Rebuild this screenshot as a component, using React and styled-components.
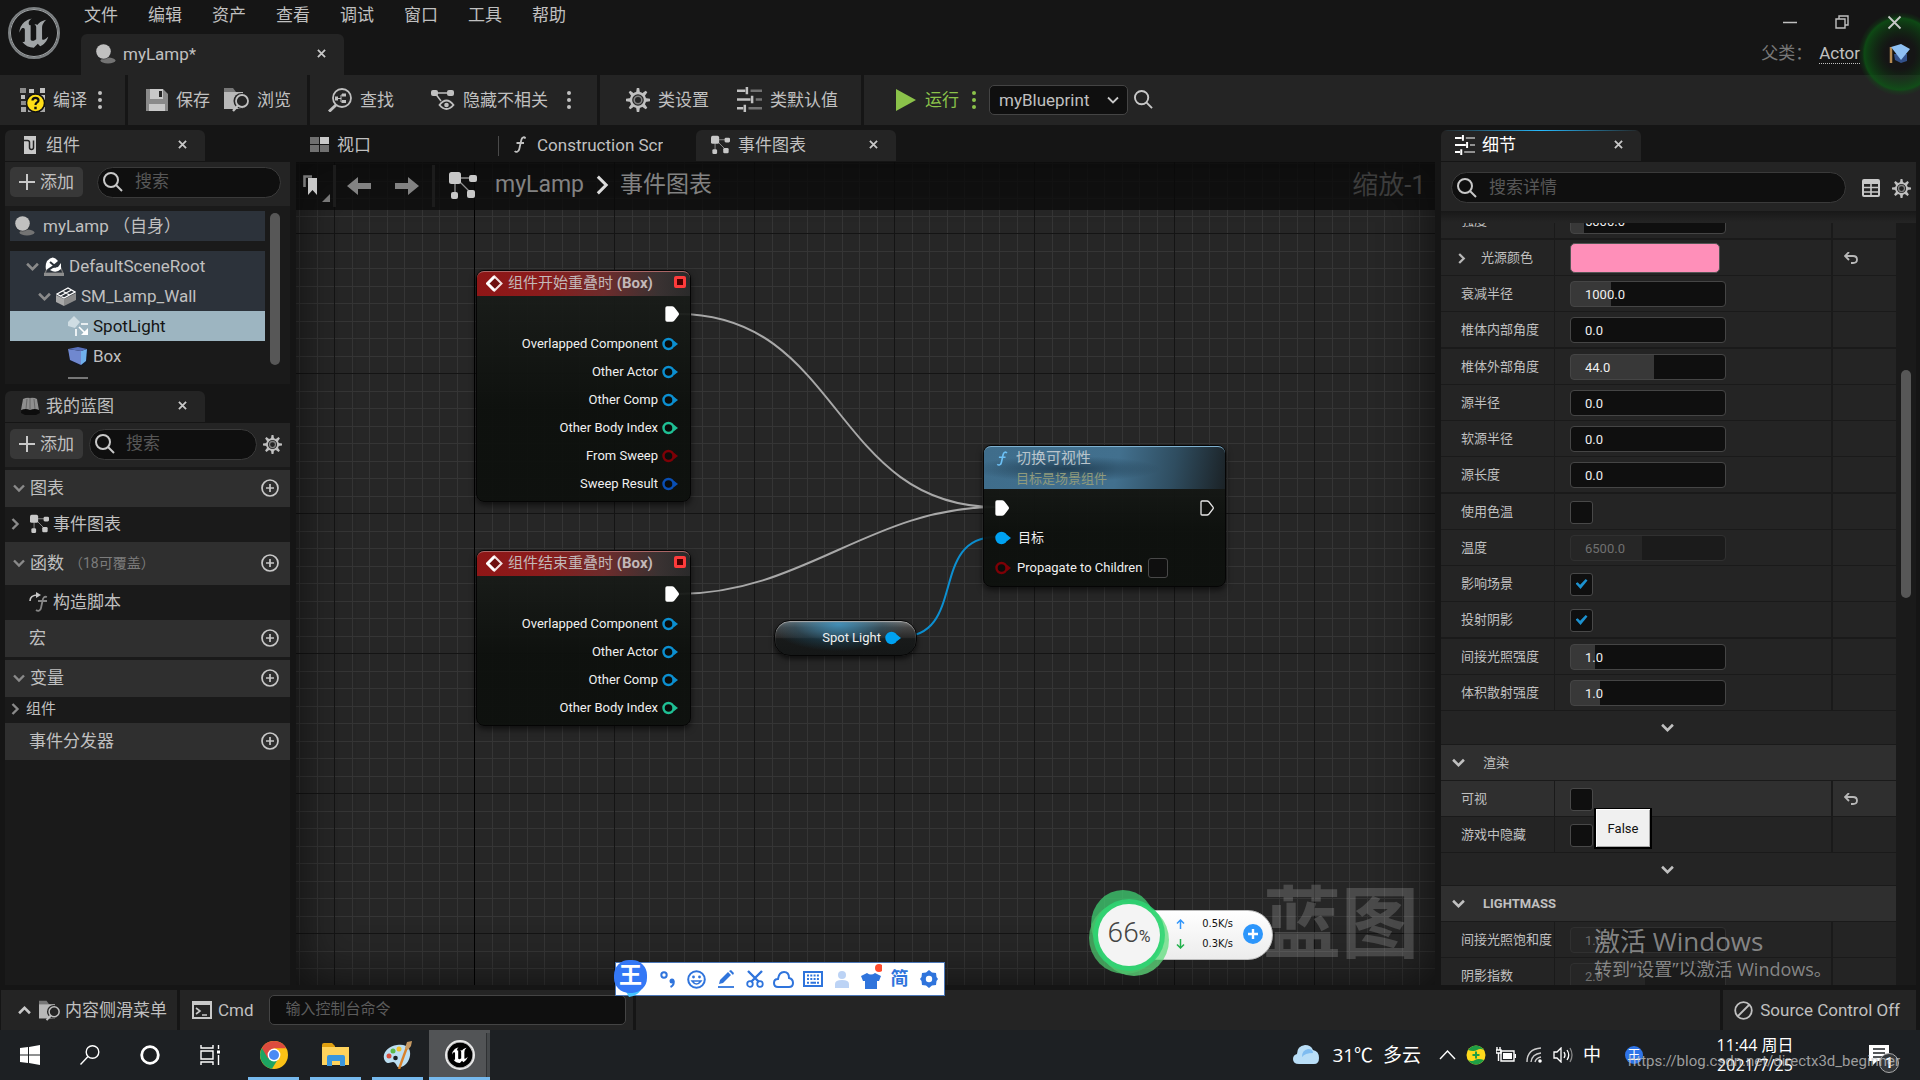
import React from "react";
import styled, { createGlobalStyle, css } from "styled-components";
import { SiUnrealengine } from "react-icons/si";

const sans = `Roboto, "Noto Sans CJK SC", sans-serif`;

const GlobalStyle = createGlobalStyle`
  * { box-sizing: border-box; }
  body { margin: 0; background: #151515; color: #c0c0c0; font: 17px/20px ${sans}; overflow: hidden; }
  button, input, select { font: inherit; color: inherit; }
  button { border: 0; padding: 0; background: none; cursor: pointer; }
  svg { display: block; flex: none; }
  a { color: inherit; text-decoration: none; }
  ul, h2, h3, p { margin: 0; padding: 0; font: inherit; list-style: none; }
`;

/* ---------- icons ---------- */

const Svg = ({ w, h = w, vb, children, ...rest }) => (
  <svg width={w} height={h} viewBox={vb || `0 0 ${w} ${h}`} fill="none" aria-hidden="true" {...rest}>
    {children}
  </svg>
);

const Close = ({ size = 9, sw = 2 }) => (
  <Svg w={size} vb="0 0 10 10">
    <path d="M1 1 9 9M9 1 1 9" stroke="#c8c8c8" strokeWidth={sw} />
  </Svg>
);
const Magnifier = ({ size = 20 }) => (
  <Svg w={size} vb="0 0 20 20">
    <circle cx="8" cy="8" r="7" stroke="#c8c8c8" strokeWidth="2" />
    <path d="m13 13 6 6" stroke="#c8c8c8" strokeWidth="2" />
  </Svg>
);
const Chevron = ({ dir = "down", size = 12, color = "#8a8a8a", sw = 2.4 }) => {
  const turn = { down: 0, up: 180, right: -90 }[dir];
  return (
    <Svg w={size} vb="0 0 12 12">
      <path d="m1 3.5 5 5 5-5" stroke={color} strokeWidth={sw} transform={`rotate(${turn} 6 6)`} />
    </Svg>
  );
};
const Gear = ({ size = 24, color = "#c0c0c0" }) => (
  <Svg w={size} vb="0 0 24 24">
    {[0, 45, 90, 135, 180, 225, 270, 315].map((a) => (
      <path key={a} d="M10 5 10.8 0h2.4L14 5z" fill={color} transform={`rotate(${a} 12 12)`} />
    ))}
    <circle cx="12" cy="12" r="7" stroke={color} strokeWidth="2.4" />
    <circle cx="12" cy="12" r="3.8" stroke={color} strokeWidth="1.6" opacity=".6" />
  </Svg>
);
const Sliders = ({ size = 24, color = "#c0c0c0" }) => (
  <Svg w={size} vb="0 0 24 24">
    <path d="M0 3.500h8M0 12h13M0 20.500h6" stroke={color} strokeWidth="2.400" />
    <path d="M13 3.500h11M18 12h6M11 20.500h13" stroke={color} strokeWidth="2.400" opacity=".5" />
    <path d="M9.500 0v7M14.500 8.500v7M7.500 17v7" stroke={color} strokeWidth="2.400" />
  </Svg>
);
const GraphIcon = ({ size = 18, color = "#c8c8c8" }) => (
  <Svg w={size} vb="0 0 28 28">
    <path d="M7 7h16M6 7v18M8 8l15 15" stroke={color} strokeWidth="1.300" opacity=".7" />
    <rect x="0" y="1" width="12" height="12" rx="2.500" fill={color} />
    <rect x="20" y="4" width="8" height="7" rx="2" fill={color} />
    <rect x="2" y="21" width="7" height="7" rx="2" fill={color} />
    <rect x="18" y="19" width="8" height="8" rx="2" fill={color} />
  </Svg>
);
const BulbIcon = ({ size = 20 }) => (
  <Svg w={size} vb="0 0 20 20">
    <ellipse cx="12" cy="16.500" rx="7.500" ry="3" fill="#737373" />
    <circle cx="7.500" cy="8" r="7.500" fill="#1f2226" opacity=".6" />
    <circle cx="7.500" cy="7.500" r="7.300" fill="#c0c0c0" />
  </Svg>
);
const CompileIcon = () => (
  <Svg w={25} h={26}>
    <path d="M0 1h6v5H0zM10 8h5v5h-5zM1 14h5v4H1z" fill="#8c8c8c" />
    <path d="M9 2h5v4H9zM1 8h4v4H1zM20 1h5v5h-5zM20 8h5v5h-5z" fill="#c0c0c0" />
    <path d="M1 20h5v5H1zM8 20h5v5H8zM20 20h5v5h-5z" fill="#a8a8a8" />
    <circle cx="15.500" cy="16" r="9" fill="#ffde17" stroke="#111" strokeWidth="1.500" />
    <path d="M12.500 13.500c0-3.500 6-3.500 6 0 0 2-3 2-3 4.500" stroke="#111" strokeWidth="2.200" />
    <path d="M14.300 19.800h2.400v2.400h-2.400z" fill="#111" />
  </Svg>
);
const SaveIcon = () => (
  <Svg w={22}>
    <path d="M0 0h17l5 5v17H0z" fill="#8a8a8a" />
    <path d="M4 0h13v10H4z" fill="#c8c8c8" />
    <path d="M13 2h3v6h-3z" fill="#242424" />
    <path d="M3 15h16v7H3z" fill="#c8c8c8" />
  </Svg>
);
const FolderSearch = ({ size = 25 }) => (
  <Svg w={size} vb="0 0 25 25">
    <path d="M0 1h9l3 4H0z" fill="#777" />
    <path d="M0 5h19v17H0z" fill="#b8b8b8" />
    <circle cx="17.500" cy="14" r="8" fill="#242424" />
    <circle cx="18" cy="14" r="6" stroke="#c0c0c0" strokeWidth="1.800" fill="#242424" />
    <path d="m14 18.500-5 5.500" stroke="#c0c0c0" strokeWidth="2.400" />
  </Svg>
);
const FindIcon = () => (
  <Svg w={24}>
    <circle cx="14" cy="10" r="9" stroke="#c0c0c0" strokeWidth="1.800" />
    <path d="m8 17-7 6.500" stroke="#c0c0c0" strokeWidth="3" />
    <path d="M7 8.500h3v4H7zM14 5.500h4v3h-4zM14 12h4v3h-4z" fill="#c0c0c0" />
    <path d="M10 10.500h3M14.500 7H13v7h2" stroke="#c0c0c0" />
  </Svg>
);
const HideIcon = () => (
  <Svg w={24} h={22}>
    <path d="M4 4h16M4 4l6 8" stroke="#c0c0c0" strokeWidth="1.500" />
    <rect y="1" width="7" height="6" rx="2" fill="#c0c0c0" />
    <rect x="16" y="1" width="7" height="6" rx="2" fill="#c0c0c0" />
    <path d="M8.500 16q7-9 14 0-7 8-14 0Z" stroke="#c0c0c0" strokeWidth="1.800" fill="#242424" />
    <circle cx="15.500" cy="16" r="2.300" fill="#c0c0c0" />
  </Svg>
);
const Dots = ({ color = "#c0c0c0" }) => (
  <Svg w={6} h={18}>
    {[2, 9, 16].map((y) => (
      <circle key={y} cx="3" cy={y} r="2" fill={color} />
    ))}
  </Svg>
);
const ComponentIcon = () => (
  <Svg w={12} h={18}>
    <path d="M0 0h12v18H0z" fill="#c8c8c8" />
    <path d="M0 4.500h3.500q2 0 2 2v5q0 2 2 2t2-2v-7" stroke="#242424" strokeWidth="1.500" />
  </Svg>
);
const BookIcon = () => (
  <Svg w={20} h={18}>
    <path d="M1 16 3 3q4-4 7-1 4-3 7 1l3 13-4 2H5z" fill="#0d0d0d" />
    <path d="M1 13 3 2q4-2 7-1 4-1 7 1l2 11q-4-2-9 0-4-2-9 0z" fill="#8f8f8f" />
    <path d="M7 2 6 12M10 1v12M14 2l1 10" stroke="#666" />
  </Svg>
);
const ViewportIcon = () => (
  <Svg w={19} h={15}>
    <path d="M0 0h9v7H0zM0 8h9v7H0zM10 8h9v7h-9z" fill="#707070" />
    <path d="M10 0h9v7h-9z" fill="#c8c8c8" />
  </Svg>
);
const FuncIcon = ({ w = 12, h = 17, color = "#c0c0c0" }) => (
  <Svg w={w} h={h} vb="0 0 12 17">
    <path d="M11.500 2.500C10.500.500 8 .800 7.300 4L5.300 13c-.600 3-3.200 3.600-4.600 2M2.500 7h7.500" stroke={color} strokeWidth="1.800" />
  </Svg>
);
const RootIcon = () => (
  <Svg w={20} h={19}>
    <path d="M3 12 1 16h18l-3-7" fill="#2c323a" stroke="#777" strokeWidth="1.200" />
    <path d="M3 4Q9-3 14 4L8 9 2 13Q1 8 3 4z" fill="#fff" />
    <path d="M6 13q6 4 11-1V6l-3 4-5 1z" fill="#fff" />
    <path d="m6 5 6 5" stroke="#2c323a" strokeWidth="2" />
    <path d="M0 16h20v3H0z" fill="#8e8e8e" />
  </Svg>
);
const MeshIcon = () => (
  <Svg w={20} h={19}>
    <path d="m0 8 8 4v7l-8-4z" fill="#a8a8a8" />
    <path d="m8 12 12-6v7L8 19z" fill="#8a8a8a" />
    <path d="m1 7 11-6 7 4L8 11zM6.500 4l7 4M4.500 9l11-6" stroke="#fff" strokeWidth="1.300" fill="#2c323a" />
  </Svg>
);
const SpotIcon = () => (
  <Svg w={20} h={20}>
    <path d="m0 6 6-6 6 6-5 6-7-2z" fill="#cfdde3" />
    <path d="M13 8h7M8 13v7M11 11l6 6" stroke="#fff" strokeWidth="1.600" />
    <path d="M20 19v-7l-7 7z" fill="#fff" />
  </Svg>
);
const BoxIcon = () => (
  <Svg w={20} h={20}>
    <path d="M1 3 12 1l8 2-1 14-6 3-12-5z" fill="#141824" />
    <path d="m0 3 13 2v14L2 14z" fill="#7088cf" />
    <path d="m13 5 6-2-1 12-5 4z" fill="#6fb0ec" />
    <path d="m0 3 10-2 9 2-6 2z" fill="#5a72bd" />
  </Svg>
);
const PlusCircle = () => (
  <Svg w={18}>
    <circle cx="9" cy="9" r="8" stroke="#c8c8c8" strokeWidth="1.700" />
    <path d="M9 5v8M5 9h8" stroke="#c8c8c8" strokeWidth="1.700" />
  </Svg>
);
const ConstructIcon = () => (
  <Svg w={20} h={20}>
    <path d="M1 9q0-6 8-6" stroke="#c8c8c8" strokeWidth="1.600" />
    <path d="M7 0l5 3-5 3z" fill="#c8c8c8" />
    <path d="M18 5c-3-1-4 1-4.500 4L12 16c-.500 3-3 3.500-5 2M9 9h9" stroke="#858585" strokeWidth="1.800" />
  </Svg>
);
const Bookmarks = () => (
  <Svg w={30} h={32}>
    <path d="M4.500 17V6.500H12" stroke="#777" strokeWidth="2.600" />
    <path d="M8 8h9v17l-4.500-5L8 25z" fill="#c8c8c8" />
    <path d="M30 24v8h-8z" fill="#777" />
  </Svg>
);
const Arrow = ({ flip }) => (
  <Svg w={24} h={18}>
    <path d={flip ? "M24 9 13 0v6H0v6h13v6z" : "M0 9 11 0v6h13v6H11v6z"} fill="#828282" />
  </Svg>
);
const Undo = () => (
  <Svg w={14} h={12}>
    <path d="M2 4h7q4 0 4 3.500T9 11H7" stroke="#b8b8b8" strokeWidth="1.800" />
    <path d="M5 0 1 4l4 4" stroke="#b8b8b8" strokeWidth="1.800" />
  </Svg>
);
const TableIcon = () => (
  <Svg w={18} h={18}>
    <rect x="1" y="1" width="16" height="16" rx="1" stroke="#c8c8c8" strokeWidth="2" />
    <path d="M1 3.500h16" stroke="#c8c8c8" strokeWidth="3" />
    <path d="M1 8.500h16M1 13h16M9 4v13" stroke="#c8c8c8" strokeWidth="1.600" />
  </Svg>
);
const ExecPin = ({ hollow }) => (
  <Svg w={14} h={16}>
    <path
      d="M2 1h5q1 0 2 1l4 5q.600 1 0 2l-4 5q-1 1-2 1H2q-1 0-1-1V2q0-1 1-1z"
      fill={hollow ? "#10120f" : "#fff"}
      stroke={hollow ? "#e6e6e6" : "#fff"}
      strokeWidth="1.300"
    />
  </Svg>
);
const DataPin = ({ color, solid }) => (
  <Svg w={16} h={14}>
    <path d="M11.500 3.500 16 7l-4.500 3.500z" fill={color} />
    <circle cx="6.500" cy="7" r="5" stroke={color} strokeWidth="2.400" fill={solid ? color : "#0a0c0a"} />
  </Svg>
);

/* ---------- shared pieces ---------- */

const Row = styled.div`
  display: flex;
  align-items: center;
  gap: ${(p) => p.$gap || 0}px;
`;

const Tab = styled.div`
  display: flex;
  align-items: center;
  gap: ${(p) => p.$gap || 7}px;
  width: ${(p) => p.$w || 200}px;
  height: ${(p) => p.$h || 31}px;
  padding: 0 ${(p) => p.$pr || 18}px 2px ${(p) => p.$pl || 15}px;
  border-radius: 6px 6px 0 0;
  background: ${(p) => (p.$idle ? "transparent" : "#242424")};
  color: ${(p) => (p.$focus ? "#fff" : "#c0c0c0")};
  white-space: nowrap;
  overflow: hidden;
  ${(p) =>
    p.$focus &&
    css`
      background: linear-gradient(90deg, #242424, #26bbff 50%, #242424) 0 0 / 100% 1px no-repeat, #242424;
    `}
  button { margin-left: auto; }
`;
const TabIcon = styled.span`
  display: flex;
  justify-content: center;
  width: 20px;
`;

const SearchBox = styled.label`
  display: flex;
  align-items: center;
  gap: ${(p) => p.$gap || 12}px;
  flex: 1;
  min-width: 0;
  height: 31px;
  padding: 0 5px;
  border: 1px solid #3a3a3a;
  border-radius: 16px;
  background: #0f0f0f;
  input {
    flex: 1;
    min-width: 0;
    height: 22px;
    padding: 0 0 2px;
    border: 0;
    outline: 0;
    background: none;
  }
  input::placeholder { color: #575757; opacity: 1; }
`;
const Search = ({ text, gap }) => (
  <SearchBox $gap={gap}>
    <Magnifier />
    <input type="text" placeholder={text} aria-label={text} />
  </SearchBox>
);

const Check = styled.input.attrs({ type: "checkbox" })`
  appearance: none;
  display: grid;
  place-items: center;
  width: ${(p) => p.$size || 23}px;
  height: ${(p) => p.$size || 23}px;
  margin: 0;
  border: 1px solid #484848;
  border-radius: 3px;
  background: #0f0f0f;
  &:checked::before {
    content: "";
    width: 12px;
    height: 10px;
    background: #1c91cf;
    clip-path: polygon(0 45%, 18% 32%, 38% 58%, 85% 0, 100% 16%, 42% 100%);
  }
`;

/* ---------- window frame ---------- */

const Page = styled.div`
  display: flex;
  flex-direction: column;
  height: 100vh;
  position: relative;
  overflow: hidden;
`;
const TitleBar = styled.header`
  display: flex;
  height: 75px;
  padding-left: 8px;
`;
const LogoCell = styled.div`
  width: 52px;
  height: 52px;
  margin: 7px 21px 0 0;
  border-radius: 50%;
  border: 2px solid #7c8082;
  color: #a0a4a6;
  svg { width: 48px; height: 48px; }
`;
const TitleMain = styled.div`
  display: flex;
  flex-direction: column;
  justify-content: space-between;
  flex: 1;
`;
const Menu = styled.nav`
  display: flex;
  gap: 30px;
  padding: 5px 0 0 3px;
`;
const TitleSide = styled.div`
  display: flex;
  flex-direction: column;
  align-items: flex-end;
  gap: 13px;
  padding-top: 14px;
`;
const WindowButtons = styled.div`
  position: relative;
  z-index: 1;
  display: flex;
  align-items: center;
  gap: 38px;
  padding-right: 18px;
  height: 16px;
`;
const ParentClass = styled.div`
  display: flex;
  gap: 7px;
  padding-right: 60px;
  color: #777;
  a { color: #c0c0c0; border-bottom: 1px dotted #c0c0c0; line-height: 20px; }
`;

const Toolbar = styled.div`
  display: flex;
  gap: 3px;
  height: 50px;
`;
const Section = styled.div`
  display: flex;
  align-items: center;
  gap: ${(p) => p.$gap || 0}px;
  padding: 0 ${(p) => p.$pr || 0}px 1px ${(p) => p.$pl || 0}px;
  background: #242424;
  flex: ${(p) => (p.$grow ? 1 : "none")};
`;
const ToolButton = styled.button`
  display: flex;
  align-items: center;
  gap: ${(p) => p.$gap || 8}px;
  white-space: nowrap;
  color: ${(p) => p.$color || "#c0c0c0"};
`;
const ComboWrap = styled.span`
  position: relative;
  display: block;
  svg { position: absolute; right: 9px; top: 9px; pointer-events: none; }
`;
const Combo = styled.select`
  appearance: none;
  display: block;
  width: 139px;
  height: 30px;
  padding: 0 9px;
  border: 1px solid #444;
  border-radius: 5px;
  background: #0f0f0f;
  outline: 0;
`;

/* ---------- workspace ---------- */

const Workspace = styled.main`
  display: flex;
  gap: 6px;
  flex: 1;
  min-height: 0;
  padding: 5px 4px 5px 5px;
`;
const LeftColumn = styled.aside`
  display: flex;
  flex-direction: column;
  width: 285px;
  gap: 7px;
`;
const Panel = styled.section`
  display: flex;
  flex-direction: column;
  min-height: 0;
  flex: ${(p) => (p.$grow ? 1 : "none")};
`;
const PanelTools = styled.div`
  display: flex;
  align-items: center;
  gap: ${(p) => p.$gap}px;
  height: 44px;
  margin-top: 1px;
  padding: ${(p) => p.$pad};
  background: #242424;
`;
const AddButton = styled.button`
  display: flex;
  align-items: center;
  justify-content: center;
  gap: 5px;
  width: 73px;
  height: 30px;
  border-radius: 5px;
  background: #383838;
`;
const Add = () => (
  <AddButton>
    <Svg w={16}>
      <path d="M8 0v16M0 8h16" stroke="#c8c8c8" strokeWidth="2" />
    </Svg>
    添加
  </AddButton>
);
const TreeArea = styled.div`
  display: flex;
  align-items: flex-start;
  gap: 5px;
  height: 178px;
  padding: 5px 10px 0 5px;
  background: #1a1a1a;
  overflow: hidden;
`;
const Tree = styled.ul`
  flex: 1;
`;
const TreeItem = styled.li`
  display: flex;
  align-items: center;
  gap: ${(p) => (p.$root ? 8 : 5)}px;
  height: 30px;
  padding-left: ${(p) => p.$indent}px;
  margin-bottom: ${(p) => (p.$root ? 10 : 0)}px;
  background: ${(p) => (p.$selected ? "#9db5c1" : p.$plain ? "transparent" : "#2c323a")};
  color: ${(p) => (p.$selected ? "#151515" : "#c0c0c0")};
`;
const ScrollThumb = styled.div`
  width: 10px;
  height: ${(p) => p.$h}px;
  margin-top: ${(p) => p.$top || 0}px;
  border-radius: 5px;
  background: #575757;
`;
const ClippedIcon = styled.li`
  width: 20px;
  height: 2px;
  margin: 6px 0 0 58px;
  background: #777;
`;
const Outline = styled.div`
  flex: 1;
  padding-top: 3px;
  background: #1a1a1a;
`;
const OutlineHead = styled.h3`
  display: flex;
  align-items: center;
  gap: 5px;
  height: ${(p) => p.$h || 37}px;
  margin-bottom: ${(p) => p.$mb || 0}px;
  padding: 0 11px 2px ${(p) => (p.$leaf ? 24 : 8)}px;
  background: #2f2f2f;
  small { font-size: 14px; color: #7c7c7c; }
  button { margin-left: auto; }
`;
const OutlineItem = styled.div`
  display: flex;
  align-items: center;
  gap: ${(p) => p.$gap || 5}px;
  height: ${(p) => p.$h || 35}px;
  padding: 0 0 2px ${(p) => p.$pl || 4}px;
  font-size: ${(p) => p.$fs || 17}px;
`;

/* ---------- graph ---------- */

const CenterColumn = styled.section`
  display: flex;
  flex-direction: column;
  flex: 1;
  min-width: 0;
`;
const TabStrip = styled.div`
  display: flex;
  align-items: center;
`;
const TabDivider = styled.span`
  width: 1px;
  height: 20px;
  background: #4a4a4a;
`;
const ClippedLabel = styled.span`
  width: 126px;
  overflow: hidden;
`;

const steps = [18, 35, 53, 70, 88, 105, 123];
const minor = (dir) =>
  `linear-gradient(${dir}, transparent 18px, ${steps
    .map((s, i) => `#353535 ${s}px ${s + 1}px, transparent ${s + 1}px ${steps[i + 1] || 140}px`)
    .join(", ")})`;
const tile = "38px 71px / 140px 140px";

const Canvas = styled.div`
  position: relative;
  flex: 1;
  margin-top: 1px;
  overflow: hidden;
  background:
    linear-gradient(#000, #000) 178px 0 / 1px 100% no-repeat,
    linear-gradient(90deg, #141414 1px, transparent 1px) ${tile},
    linear-gradient(#141414 1px, transparent 1px) ${tile},
    ${minor("90deg")} ${tile},
    ${minor("180deg")} ${tile},
    #262626;
  &::before {
    content: "";
    position: absolute;
    inset: 0;
    box-shadow: inset 0 0 50px rgba(0, 0, 0, 0.65);
  }
`;
const Crumbs = styled.div`
  position: relative;
  display: flex;
  align-items: center;
  height: 48px;
  padding: 0 9px 0 4px;
  background: rgba(10, 10, 10, 0.75);
  color: #828282;
  font-size: 23px;
  line-height: 30px;
`;
const CrumbDivider = styled.span`
  width: 3px;
  height: 42px;
  margin-left: 3px;
  background: #1c1c1c;
`;
const CrumbNav = styled.div`
  display: flex;
  gap: 24px;
  padding: 0 10px 0 11px;
`;
const CrumbPath = styled.div`
  display: flex;
  align-items: center;
  gap: 8px;
  padding: 0 0 2px 14px;
  span:first-of-type { padding-left: 10px; }
`;
const Zoom = styled.span`
  margin-left: auto;
  padding-bottom: 3px;
  color: #3c3c3c;
  font-size: 26px;
`;
const Wires = styled.svg`
  position: absolute;
  inset: 0;
`;
const Node = styled.article`
  position: absolute;
  left: ${(p) => p.$x}px;
  top: ${(p) => p.$y}px;
  width: ${(p) => p.$w}px;
  border: 1px solid #050505;
  border-radius: 8px;
  background: linear-gradient(rgba(27, 30, 27, 0.94), rgba(13, 16, 13, 0.95) 60%);
  box-shadow: 0 3px 6px rgba(0, 0, 0, 0.6);
  color: #f0f0f0;
  font-size: 13px;
`;
const EventHead = styled.header`
  display: flex;
  align-items: center;
  gap: 5px;
  height: 25px;
  padding: 0 4px 2px 9px;
  border-radius: 7px 7px 0 0;
  border-top: 1px solid #a66;
  background: linear-gradient(90deg, #8f1616, #8a1c1c 30%, #6d2c2c 60%, #3a3232 85%, #2a2a2a);
  color: #c3b8b8;
  font-size: 15px;
  white-space: nowrap;
  b { font-weight: 700; }
  i { width: 12px; height: 12px; margin: 0 0 2px auto; border: 3px solid #ff3b3b; border-radius: 2px; background: #4a0000; }
`;
const Pins = styled.div`
  padding: ${(p) => (p.$wide ? "4px 11px 3px 11px" : "4px 8px 3px")};
`;
const PinRow = styled.div`
  display: flex;
  align-items: center;
  justify-content: ${(p) => p.$align || "flex-end"};
  gap: ${(p) => p.$gap || 4}px;
  height: ${(p) => p.$h || 28}px;
  margin-bottom: ${(p) => p.$mb || 0}px;
  padding-right: ${(p) => p.$pr || 0}px;
  white-space: nowrap;
`;
const CallHead = styled.header`
  display: grid;
  grid-template-columns: 12px 1fr;
  column-gap: 8px;
  height: 43px;
  padding: 1px 0 0 12px;
  border-radius: 7px 7px 0 0;
  border-top: 1px solid #7eb0cf;
  background:
    radial-gradient(ellipse at 34% 52%, rgba(22, 45, 62, 0.7), transparent 42%),
    linear-gradient(100deg, #3f6d8b, #42708e 55%, #2f4d60 78%, #1b2226);
  color: #b9c4cb;
  font-size: 15px;
  line-height: 20px;
  svg { margin-top: 3px; }
  p { grid-column: 2; color: #8f9a7c; font-size: 13px; line-height: 19px; }
`;
const VarNode = styled.div`
  position: absolute;
  left: 478px;
  top: 458px;
  display: flex;
  align-items: center;
  justify-content: flex-end;
  gap: 4px;
  width: 143px;
  height: 36px;
  padding-right: 15px;
  border: 1px solid #060606;
  border-radius: 16px;
  background:
    radial-gradient(ellipse at 45% 10%, rgba(62, 150, 196, 0.85), rgba(30, 90, 120, 0.35) 40%, transparent 62%),
    linear-gradient(#777 0, #444 20%, #2a2a2a 48%, #181a1a 52%, #151717);
  box-shadow: 0 3px 5px rgba(0, 0, 0, 0.6), inset 0 1px 1px #aaa;
  color: #f0f0f0;
  font-size: 13px;
`;
const CanvasMark = styled.span`
  position: absolute;
  right: 16px;
  bottom: 17px;
  color: rgba(255, 255, 255, 0.17);
  font-size: 78px;
  font-weight: 700;
  line-height: 84px;
`;

/* ---------- details ---------- */

const Details = styled.aside`
  display: flex;
  flex-direction: column;
  width: 475px;
  min-height: 0;
`;
const DetailsTools = styled.div`
  display: flex;
  align-items: flex-start;
  gap: 12px;
  height: 61px;
  margin-top: 1px;
  padding: 10px 5px 0 10px;
  background:
    linear-gradient(#181818, #242424) 0 49px / 100% 11px no-repeat,
    #242424;
  > button { margin-top: 7px; }
  label { margin-right: 4px; }
`;
const DetailsBody = styled.div`
  display: flex;
  flex: 1;
  min-height: 0;
  overflow: hidden;
  background: #1a1a1a;
`;
const Props = styled.div`
  flex: 1;
  font-size: 13px;
`;
const Scrolled = styled.div`
  margin-top: -20px;
`;
const PropRow = styled.div`
  display: grid;
  grid-template-columns: 113px 1fr 63px;
  height: 36px;
  border-bottom: 1px solid #1a1a1a;
  background: ${(p) => (p.$hover ? "#2f2f2f" : "#242424")};
  ${(p) => p.$thick && "height: 37px; border-bottom-width: 2px;"}
  > label { display: flex; align-items: center; gap: 14px; padding: 1px 0 0 ${(p) => (p.$sub ? 15 : 20)}px; white-space: nowrap; }
  > div { display: flex; align-items: center; padding: 1px 0 0 15px; border-left: 1px solid #1a1a1a; border-right: 2px solid #1a1a1a; }
  > button { display: flex; align-items: center; padding-left: 11px; }
`;
const Num = styled.input.attrs({ type: "text" })`
  width: 156px;
  height: 26px;
  padding: 0 14px;
  border: 1px solid ${(p) => (p.disabled ? "#303030" : "#454545")};
  border-radius: 4px;
  outline: 0;
  color: ${(p) => (p.disabled ? "#707070" : "#f0f0f0")};
  background: linear-gradient(
    90deg,
    ${(p) => (p.disabled ? "#262626" : "#383838")} ${(p) => p.$fill}px,
    ${(p) => (p.disabled ? "#1b1b1b" : "#0f0f0f")} ${(p) => p.$fill}px
  );
`;
const Swatch = styled.button`
  width: 150px;
  height: 30px;
  border: 1px solid #555;
  border-radius: 5px;
  background: #ff8fb9;
`;
const Expander = styled.button`
  display: flex;
  align-items: center;
  justify-content: center;
  width: 100%;
  height: ${(p) => p.$h}px;
  padding-right: 2px;
  border-bottom: 1px solid #1a1a1a;
  background: #242424;
`;
const Category = styled.h3`
  display: flex;
  align-items: center;
  gap: 18px;
  height: 36px;
  padding-left: 11px;
  border-bottom: 1px solid #1a1a1a;
  background: #2f2f2f;
  font-weight: ${(p) => (p.$bold ? 700 : 400)};
`;
const ScrollRail = styled.div`
  width: 20px;
  padding-left: 5px;
`;

/* ---------- status bar ---------- */

const StatusBar = styled.footer`
  display: flex;
  gap: 3px;
  height: 40px;
  padding: 0 4px 0 1px;
`;
const StatusPart = styled.div`
  display: flex;
  align-items: center;
  gap: ${(p) => p.$gap || 6}px;
  padding: 0 ${(p) => p.$pr || 0}px 0 ${(p) => p.$pl || 0}px;
  background: #242424;
  flex: ${(p) => (p.$grow ? 1 : "none")};
`;
const CmdInput = styled.input`
  width: 357px;
  height: 30px;
  margin-left: 9px;
  padding: 0 16px 3px;
  border: 1px solid #444;
  border-radius: 5px;
  background: #0f0f0f;
  font-size: 15px;
  outline: 0;
  &::placeholder { color: #5c5c5c; opacity: 1; }
`;

/* ---------- desktop taskbar ---------- */

const Taskbar = styled.footer`
  display: flex;
  height: 50px;
  background: #1d2023;
  color: #fff;
`;
const TaskButton = styled.button`
  display: flex;
  align-items: center;
  justify-content: center;
  width: ${(p) => (p.$app ? 51 : 60)}px;
  margin-right: ${(p) => (p.$app ? 11 : 0)}px;
  border-bottom: 3px solid ${(p) => (p.$app ? "#76b9ed" : "transparent")};
  border-top: 3px solid transparent;
  ${(p) =>
    p.$active &&
    css`
      width: 61px;
      margin-left: -5px;
      background: linear-gradient(90deg, #525456 57px, #2f3133 57px 58px, #45484a 58px);
      background-origin: border-box;
      border-top-color: #525456;
    `}
`;
const AppGroup = styled.div`
  display: flex;
  padding-left: 8px;
`;
const RoundLogo = styled.span`
  display: grid;
  place-items: center;
  width: 30px;
  height: 30px;
  border: 2px solid #e8e8e8;
  border-radius: 50%;
  background: #000;
`;
const Tray = styled.div`
  display: flex;
  align-items: center;
  margin-left: auto;
  padding-right: 31px;
`;
const Weather = styled.div`
  display: flex;
  align-items: center;
  gap: 12px;
  margin-right: 18px;
  font: 19px/24px "Open Sans", "Noto Sans CJK SC", sans-serif;
`;
const TrayIcons = styled.div`
  display: flex;
  align-items: center;
  gap: 10px;
  font-size: 18px;
`;
const Clock = styled.div`
  width: 90px;
  margin: 0 69px 0 67px;
  text-align: center;
  font: 16px/20px "Open Sans", "Noto Sans CJK SC", sans-serif;
`;
const Notice = styled.div`
  position: relative;
  span {
    position: absolute;
    left: 10px;
    top: 9px;
    width: 20px;
    height: 20px;
    border: 1px solid #aaa;
    border-radius: 50%;
    background: #35383b;
    font: 700 14px/18px ${sans};
    text-align: center;
  }
`;
const ImeBadge = styled.span`
  width: 18px;
  height: 18px;
  margin-left: 14px;
  border-radius: 50%;
  background: #2f74e8;
  color: #fff;
  font-size: 13px;
  line-height: 18px;
  text-align: center;
`;

/* ---------- floating things over the window ---------- */

const Over = styled.div`
  position: absolute;
  left: ${(p) => p.$x}px;
  top: ${(p) => p.$y}px;
`;
const Halo = styled(Over)`
  pointer-events: none;
`;
const Tip = styled(Over)`
  width: 58px;
  height: 41px;
  border: 2px solid #000;
  border-top-width: 1px;
  box-shadow: inset 1px 1px 0 #fff, inset -1px -1px 0 #aaa;
  background: #f0f0f0;
  color: #111;
  font-size: 13px;
  line-height: 40px;
  text-align: center;
`;
const Activate = styled(Over)`
  color: rgba(190, 190, 190, 0.65);
  font: 18px/24px "Open Sans", "Noto Sans CJK SC", sans-serif;
  white-space: nowrap;
  pointer-events: none;
  h2 { font-size: 26px; line-height: 32px; }
`;
const PageMark = styled(Over)`
  color: rgba(200, 200, 200, 0.75);
  font: 15px/20px Roboto, sans-serif;
  white-space: nowrap;
`;
const NetPill = styled(Over)`
  display: flex;
  align-items: center;
  justify-content: flex-end;
  gap: 10px;
  width: 133px;
  height: 50px;
  padding: 0 9px 2px 0;
  border-radius: 0 25px 25px 0;
  border: 1px solid #bbb;
  background: linear-gradient(#fff, #ececec);
  color: #111;
  font: 11px/20px "DejaVu Sans Condensed", "DejaVu Sans", sans-serif;
  p { display: grid; grid-template-columns: 26px 1fr; align-items: center; }
`;
const Ball = styled(Over)`
  display: grid;
  width: 82px;
  height: 86px;
  > * { grid-area: 1 / 1; }
  p {
    place-self: center;
    padding-top: 4px;
    z-index: 1;
    color: #444;
    font: 300 28px/30px Roboto, sans-serif;
    small { font-size: 16px; font-weight: 400; }
  }
`;
const ImeBar = styled(Over)`
  display: flex;
  align-items: center;
  width: 330px;
  height: 34px;
  padding-left: 37px;
  border: 1px solid #4c78b8;
  background: #fff;
  button {
    display: flex;
    align-items: center;
    justify-content: center;
    width: 29px;
    color: #2f74dc;
    font-size: 18px;
    font-weight: 700;
  }
`;
const ImeBlob = styled(Over)`
  display: grid;
  > * { grid-area: 1 / 1; }
  span { color: #fff; font-size: 23px; font-weight: 700; line-height: 32px; text-align: center; }
`;

const blue = "#2f74dc";

const lightProps = [
  { name: "强度", value: "5000.0", fill: 13, thick: true },
  { name: "光源颜色", swatch: true, sub: true, reset: true },
  { name: "衰减半径", value: "1000.0", fill: 40 },
  { name: "椎体内部角度", value: "0.0", fill: 0, thick: true },
  { name: "椎体外部角度", value: "44.0", fill: 83 },
  { name: "源半径", value: "0.0", fill: 0 },
  { name: "软源半径", value: "0.0", fill: 0 },
  { name: "源长度", value: "0.0", fill: 0, thick: true },
  { name: "使用色温", check: false },
  { name: "温度", value: "6500.0", fill: 71, disabled: true },
  { name: "影响场景", check: true },
  { name: "投射阴影", check: true, thick: true },
  { name: "间接光照强度", value: "1.0", fill: 24 },
  { name: "体积散射强度", value: "1.0", fill: 29 },
];

const Property = ({ name, value, fill, thick, swatch, sub, reset, check, disabled, hover }) => (
  <PropRow $thick={thick} $sub={sub} $hover={hover}>
    <label htmlFor={name}>
      {sub && <Chevron dir="right" size={11} color="#b8b8b8" />}
      {name}
    </label>
    <div>
      {swatch && <Swatch id={name} aria-label={name} />}
      {value !== undefined && <Num id={name} defaultValue={value} $fill={fill} disabled={disabled} />}
      {check !== undefined && <Check id={name} defaultChecked={check} />}
    </div>
    {reset && (
      <button aria-label="重置">
        <Undo />
      </button>
    )}
  </PropRow>
);

const sky = "#0c8fd0";
const eventPins = [
  ["Overlapped Component", sky],
  ["Other Actor", sky],
  ["Other Comp", sky],
  ["Other Body Index", "#1fbf94"],
  ["From Sweep", "#7d0006"],
  ["Sweep Result", "#0a4fb4"],
];

const EventNode = ({ x, y, title, count }) => (
  <Node $x={x} $y={y} $w={215}>
    <EventHead>
      <Svg w={17}>
        <path d="M8.500 1.500 15.500 8.500l-7 7-7-7z" stroke="#f2dede" strokeWidth="2" fill="#6d0f0f" />
        <path d="M8.500 1.500 1.500 8.500l7 7" stroke="#fff" strokeWidth="3" />
      </Svg>
      <span>
        {title} <b>(Box)</b>
      </span>
      <i />
    </EventHead>
    <Pins>
      <PinRow $mb={2} $pr={3}>
        <ExecPin />
      </PinRow>
      {eventPins.slice(0, count).map(([name, color]) => (
        <PinRow key={name} $pr={4}>
          {name}
          <DataPin color={color} />
        </PinRow>
      ))}
    </Pins>
  </Node>
);

const CloseTab = () => (
  <button aria-label="关闭">
    <Close />
  </button>
);

export default function App() {
  return (
    <Page>
      <GlobalStyle />
      <TitleBar>
        <LogoCell>
          <SiUnrealengine />
        </LogoCell>
        <TitleMain>
          <Menu>
            {["文件", "编辑", "资产", "查看", "调试", "窗口", "工具", "帮助"].map((m) => (
              <button key={m}>{m}</button>
            ))}
          </Menu>
          <Tab $w={263} $h={41}>
            <BulbIcon />
            myLamp*
            <CloseTab />
          </Tab>
        </TitleMain>
        <TitleSide>
          <WindowButtons>
            <button aria-label="最小化">
              <Svg w={14}>
                <path d="M0 7.500h14" stroke="#c0c0c0" strokeWidth="1.500" />
              </Svg>
            </button>
            <button aria-label="还原">
              <Svg w={14}>
                <path d="M1 4h9v9H1zM4 4V1h9v9h-3" stroke="#c0c0c0" strokeWidth="1.400" />
              </Svg>
            </button>
            <button aria-label="关闭窗口">
              <Close size={15} sw={1.2} />
            </button>
          </WindowButtons>
          <ParentClass>
            父类：<a href="#actor">Actor</a>
          </ParentClass>
        </TitleSide>
      </TitleBar>

      <Toolbar>
        <Section $pl={20} $pr={22} $gap={10}>
          <ToolButton>
            <CompileIcon />
            编译
          </ToolButton>
          <Dots />
        </Section>
        <Section $pl={18} $pr={16} $gap={14}>
          <ToolButton>
            <SaveIcon />
            保存
          </ToolButton>
          <ToolButton>
            <FolderSearch />
            浏览
          </ToolButton>
        </Section>
        <Section $pl={18} $pr={25} $gap={37}>
          <ToolButton>
            <FindIcon />
            查找
          </ToolButton>
          <Row $gap={18}>
            <ToolButton>
              <HideIcon />
              隐藏不相关
            </ToolButton>
            <Dots />
          </Row>
        </Section>
        <Section $pl={26} $pr={23} $gap={28}>
          <ToolButton>
            <Gear />
            类设置
          </ToolButton>
          <ToolButton>
            <Sliders size={25} />
            类默认值
          </ToolButton>
        </Section>
        <Section $grow $pl={32} $gap={12}>
          <ToolButton $color="#8bc24a">
            <Svg w={21} h={22}>
              <path d="M0 0 20 11 0 22z" fill="#8bc24a" />
            </Svg>
            运行
          </ToolButton>
          <Dots color="#8bc24a" />
          <Row $gap={6}>
            <ComboWrap>
              <Combo aria-label="调试对象" defaultValue="myBlueprint">
                <option>myBlueprint</option>
              </Combo>
              <Chevron color="#c8c8c8" sw={1.8} />
            </ComboWrap>
            <button aria-label="查找对象">
              <Magnifier size={19} />
            </button>
          </Row>
        </Section>
      </Toolbar>

      <Workspace>
        <LeftColumn>
          <Panel>
            <Tab $gap={6}>
              <TabIcon>
                <ComponentIcon />
              </TabIcon>
              组件
              <CloseTab />
            </Tab>
            <PanelTools $gap={14} $pad="0 9px 4px 5px">
              <Add />
              <Search text="搜索" gap={12} />
            </PanelTools>
            <TreeArea>
              <Tree>
                <TreeItem $indent={5} $root>
                  <BulbIcon />
                  <span>myLamp （自身）</span>
                </TreeItem>
                <TreeItem $indent={16}>
                  <Chevron size={13} />
                  <RootIcon />
                  DefaultSceneRoot
                </TreeItem>
                <TreeItem $indent={28}>
                  <Chevron size={13} />
                  <MeshIcon />
                  SM_Lamp_Wall
                </TreeItem>
                <TreeItem $indent={58} $selected>
                  <SpotIcon />
                  SpotLight
                </TreeItem>
                <TreeItem $indent={58} $plain>
                  <BoxIcon />
                  Box
                </TreeItem>
                <ClippedIcon />
              </Tree>
              <ScrollThumb $h={152} $top={2} />
            </TreeArea>
          </Panel>

          <Panel $grow>
            <Tab $gap={6}>
              <BookIcon />
              我的蓝图
              <CloseTab />
            </Tab>
            <PanelTools $gap={6} $pad="0 8px 2px 5px">
              <Add />
              <Search text="搜索" gap={11} />
              <button aria-label="设置">
                <Gear size={19} />
              </button>
            </PanelTools>
            <Outline>
              <OutlineHead>
                <Chevron />
                图表
                <button aria-label="添加图表">
                  <PlusCircle />
                </button>
              </OutlineHead>
              <OutlineItem $gap={9}>
                <Chevron dir="right" />
                <Row $gap={4}>
                  <GraphIcon size={19} />
                  事件图表
                </Row>
              </OutlineItem>
              <OutlineHead $h={43}>
                <Chevron />
                函数
                <small>（18可覆盖）</small>
                <button aria-label="添加函数">
                  <PlusCircle />
                </button>
              </OutlineHead>
              <OutlineItem $pl={24} $gap={4}>
                <ConstructIcon />
                构造脚本
              </OutlineItem>
              <OutlineHead $leaf $mb={3}>
                宏
                <button aria-label="添加宏">
                  <PlusCircle />
                </button>
              </OutlineHead>
              <OutlineHead>
                <Chevron />
                变量
                <button aria-label="添加变量">
                  <PlusCircle />
                </button>
              </OutlineHead>
              <OutlineItem $h={26} $fs={15}>
                <Chevron dir="right" />
                组件
              </OutlineItem>
              <OutlineHead $leaf>
                事件分发器
                <button aria-label="添加事件分发器">
                  <PlusCircle />
                </button>
              </OutlineHead>
            </Outline>
          </Panel>
        </LeftColumn>

        <CenterColumn>
          <TabStrip>
            <Tab $idle $w={202} $pl={14} $gap={8}>
              <ViewportIcon />
              视口
            </Tab>
            <TabDivider />
            <Tab $idle $w={197} $gap={11}>
              <FuncIcon />
              <ClippedLabel>Construction Script</ClippedLabel>
            </Tab>
            <Tab $gap={8}>
              <GraphIcon size={19} />
              事件图表
              <CloseTab />
            </Tab>
          </TabStrip>
          <Canvas>
            <Crumbs>
              <Bookmarks />
              <CrumbDivider />
              <CrumbNav>
                <button aria-label="后退">
                  <Arrow />
                </button>
                <button aria-label="前进">
                  <Arrow flip />
                </button>
              </CrumbNav>
              <CrumbDivider />
              <CrumbPath>
                <GraphIcon size={28} />
                <span>myLamp</span>
                <Chevron dir="right" size={20} color="#dcdcdc" sw={1.8} />
                <span>事件图表</span>
              </CrumbPath>
              <Zoom>缩放-1</Zoom>
            </Crumbs>
            <CanvasMark>蓝图</CanvasMark>
            <Wires width="100%" height="100%" fill="none" aria-hidden="true">
              <path d="M382 152C546 152 536 345 700 345" stroke="#a8a8a8" strokeWidth="2" />
              <path d="M382 432C507 432 575 345 700 345" stroke="#a8a8a8" strokeWidth="2" />
              <path d="M604 475C672 475 632 375 700 375" stroke="#0c8fd0" strokeWidth="2" />
            </Wires>
            <EventNode x={180} y={108} title="组件开始重叠时" count={6} />
            <EventNode x={180} y={388} title="组件结束重叠时" count={4} />
            <Node $x={687} $y={283} $w={243}>
              <CallHead>
                <FuncIcon h={15} color="#6cc0f5" />
                切换可视性
                <p>目标是场景组件</p>
              </CallHead>
              <Pins $wide>
                <PinRow $align="space-between" $h={30}>
                  <ExecPin />
                  <ExecPin hollow />
                </PinRow>
                <PinRow $align="flex-start" $h={30} $gap={7}>
                  <DataPin color="#00a2f2" solid />
                  目标
                </PinRow>
                <PinRow as="label" $align="flex-start" $h={30} $gap={6}>
                  <DataPin color="#7d0006" />
                  Propagate to Children
                  <Check $size={20} />
                </PinRow>
              </Pins>
            </Node>
            <VarNode>
              Spot Light
              <DataPin color="#00a2f2" solid />
            </VarNode>
          </Canvas>
        </CenterColumn>

        <Details>
          <Tab $focus $pl={14}>
            <Sliders size={20} color="#fff" />
            细节
            <CloseTab />
          </Tab>
          <DetailsTools>
            <Search text="搜索详情" gap={12} />
            <button aria-label="表格视图">
              <TableIcon />
            </button>
            <button aria-label="设置">
              <Gear size={19} />
            </button>
          </DetailsTools>
          <DetailsBody>
            <Props>
              <Scrolled>
                {lightProps.map((r) => (
                  <Property key={r.name} {...r} />
                ))}
                <Expander $h={34} aria-label="展开光源">
                  <Chevron size={13} color="#c0c0c0" />
                </Expander>
                <Category>
                  <Chevron size={13} color="#c0c0c0" />
                  渲染
                </Category>
                <Property name="可视" check={false} reset hover />
                <Property name="游戏中隐藏" check={false} />
                <Expander $h={33} aria-label="展开渲染">
                  <Chevron size={13} color="#c0c0c0" />
                </Expander>
                <Category $bold>
                  <Chevron size={13} color="#c0c0c0" />
                  LIGHTMASS
                </Category>
                <Property name="间接光照饱和度" value="1.0" fill={30} disabled />
                <Property name="阴影指数" value="2.0" fill={74} disabled />
              </Scrolled>
            </Props>
            <ScrollRail>
              <ScrollThumb $h={228} $top={147} />
            </ScrollRail>
          </DetailsBody>
        </Details>
      </Workspace>

      <StatusBar>
        <StatusPart $pl={17} $pr={10} $gap={8}>
          <Chevron dir="up" size={13} color="#c8c8c8" />
          <ToolButton $gap={5}>
            <FolderSearch size={21} />
            内容侧滑菜单
          </ToolButton>
        </StatusPart>
        <StatusPart $pl={12} $pr={7}>
          <Svg w={20} h={18}>
            <rect x="1" y="1" width="18" height="16" stroke="#c8c8c8" strokeWidth="2" />
            <path d="M1 2.500h18" stroke="#c8c8c8" strokeWidth="3" />
            <path d="m4 7 4 3-4 3M10 14h5" stroke="#c8c8c8" strokeWidth="1.600" />
          </Svg>
          <label htmlFor="console">Cmd</label>
          <CmdInput id="console" type="text" placeholder="输入控制台命令" />
        </StatusPart>
        <StatusPart $grow />
        <StatusPart $pl={11} $pr={16} $gap={7}>
          <Svg w={19}>
            <circle cx="9.500" cy="9.500" r="8.300" stroke="#c0c0c0" strokeWidth="1.800" />
            <path d="M15 4 4 15" stroke="#c0c0c0" strokeWidth="1.800" />
          </Svg>
          Source Control Off
        </StatusPart>
      </StatusBar>

      <Taskbar>
        <TaskButton aria-label="开始">
          <Svg w={20}>
            <path d="m0 3 8-1v7.500H0zM9 2l11-2v9.500H9zM0 10.500h8V18l-8-1zM9 10.500h11V20L9 18z" fill="#fff" />
          </Svg>
        </TaskButton>
        <TaskButton aria-label="搜索">
          <Svg w={20}>
            <circle cx="12.500" cy="7" r="6.300" stroke="#fff" strokeWidth="1.400" />
            <path d="M8 11.500.500 19.500" stroke="#fff" strokeWidth="1.400" />
          </Svg>
        </TaskButton>
        <TaskButton aria-label="Cortana">
          <Svg w={20}>
            <circle cx="10" cy="10" r="8.300" stroke="#fff" strokeWidth="2.800" />
          </Svg>
        </TaskButton>
        <TaskButton aria-label="任务视图">
          <Svg w={20}>
            <path d="M1 0v3h12V0M1 20v-3h12v3M1 6h12v8H1zM18.500 0v4M18.500 10v10" stroke="#fff" strokeWidth="1.400" />
            <path d="M17 5.500h3v3h-3z" fill="#fff" />
          </Svg>
        </TaskButton>
        <AppGroup>
          <TaskButton $app aria-label="Chrome">
            <Svg w={28}>
              <circle cx="14" cy="14" r="14" fill="#fbc116" />
              <path d="M14 14 1.900 7A14 14 0 0 0 12 27.800L18 18z" fill="#1da462" />
              <path d="M1.900 7A14 14 0 0 1 26.200 7.200H14L8 17.500z" fill="#dd4b3e" />
              <circle cx="14" cy="14" r="6.400" fill="#fff" />
              <circle cx="14" cy="14" r="5" fill="#4a8af4" />
            </Svg>
          </TaskButton>
          <TaskButton $app aria-label="文件资源管理器">
            <Svg w={28} h={24}>
              <path d="M0 2q0-2 2-2h8l3 3v5H0z" fill="#e0a010" />
              <path d="M0 4h27v18H0z" fill="#ffd35c" />
              <path d="M5 23v-9q0-2 2-2h14q2 0 2 2v9h-5v-5h-8v5z" fill="#3a96dd" />
            </Svg>
          </TaskButton>
          <TaskButton $app aria-label="画图">
            <Svg w={30} h={28}>
              <path d="M14 4C4 5-2 14 2 20c4 5 7-1 10 2s1 5 6 4c8-2 11-13 8-18-2-4-7-5-12-4z" fill="#bcdff2" />
              <circle cx="6" cy="15" r="2.500" fill="#d94f3d" />
              <circle cx="10" cy="10" r="2.500" fill="#5bb94a" />
              <circle cx="16" cy="8" r="2.500" fill="#f0c02c" />
              <circle cx="12.500" cy="17" r="2.300" fill="#1d2023" />
              <path d="M16 28 24 6" stroke="#d9822b" strokeWidth="2.400" />
              <path d="m22 7 2-6 5-1-1 5-3 4z" fill="#c79a63" />
            </Svg>
          </TaskButton>
          <TaskButton $app $active aria-label="Unreal Editor">
            <RoundLogo>
              <SiUnrealengine size={26} color="#fff" />
            </RoundLogo>
          </TaskButton>
        </AppGroup>

        <Tray>
          <Weather>
            <Svg w={27} h={20}>
              <path d="M6 19q-6 0-6-5 0-4 4-5Q4 1 12 0q6 0 8 5 6 1 6 8 0 6-5 6z" fill="#b9def7" />
              <path d="M9 12Q9 5 15 4q5 0 5 4-8 0-11 4z" fill="#7fbcf0" />
            </Svg>
            <span>31℃&nbsp; 多云</span>
          </Weather>
          <TrayIcons>
            <Svg w={17} h={10}>
              <path d="m1 9 7.500-8L16 9" stroke="#fff" strokeWidth="1.400" />
            </Svg>
            <Svg w={20}>
              <circle cx="10" cy="10" r="9.500" fill="#ffd91c" />
              <path d="M2 5A9.500 9.500 0 0 1 18 5q-4-2-7 0T2 5zM18 15A9.500 9.500 0 0 1 2 15q4 2 7 0t9 0z" fill="#1f9e45" />
              <path d="M10 6.500v7M6.500 10h7" stroke="#1f9e45" strokeWidth="2" />
            </Svg>
            <Svg w={20} h={16}>
              <path d="M5 4h13v10H5z" stroke="#fff" strokeWidth="1.400" />
              <path d="M7 6h9v6H7zM18.500 7H20v4h-1.500z" fill="#fff" />
              <path d="M1 0v3M4 0v3M0 3h5v3H0zM2.500 6v8" stroke="#fff" strokeWidth="1.400" />
            </Svg>
            <Svg w={17} h={16}>
              <path d="M1 15Q1 2 15 1M5 15Q6 7 15 6M9 15q1-4 6-5" stroke="#ccc" strokeWidth="1.400" />
              <circle cx="14" cy="14" r="1.800" fill="#fff" />
            </Svg>
            <Svg w={20} h={16}>
              <path d="M1 5h3l4-4v14l-4-4H1z" stroke="#fff" strokeWidth="1.300" />
              <path d="M11 5q2 3 0 6M14 3q3.500 5 0 10" stroke="#fff" strokeWidth="1.300" />
              <path d="M17 1q4 7 0 14" stroke="#888" strokeWidth="1.300" />
            </Svg>
            <span>中</span>
            <ImeBadge>王</ImeBadge>
          </TrayIcons>
          <Clock>
            <div>11:44 周日</div>
            <div>2021/7/25</div>
          </Clock>
          <Notice>
            <Svg w={20} h={22}>
              <path d="M0 1h20v16H8l-4 4v-4H0z" fill="#fff" />
              <path d="M4 5h12M4 9h12M4 13h12" stroke="#1d2023" strokeWidth="1.300" />
            </Svg>
            <span>1</span>
          </Notice>
        </Tray>
      </Taskbar>

      <Halo $x={1858} $y={12}>
        <Svg w={84}>
          <defs>
            <radialGradient id="halo">
              <stop offset="0.350" stopColor="#0b3d0f" stopOpacity="0" />
              <stop offset="0.850" stopColor="#0b5a14" stopOpacity=".75" />
              <stop offset="0.900" stopColor="#0b5a14" stopOpacity=".3" />
              <stop offset="1" stopColor="#0b5a14" stopOpacity="0" />
            </radialGradient>
          </defs>
          <circle cx="42" cy="42" r="42" fill="url(#halo)" />
          <path d="M33 35v16" stroke="#b58a52" strokeWidth="2.500" />
          <path d="M36 42h13v7l-6 2-6-3z" fill="#33518a" />
          <path d="m33 35 10-3 9 5-9 11z" fill="#8fc0f2" />
        </Svg>
      </Halo>

      <NetPill $x={1140} $y={910}>
        <div>
          <p>
            <Svg w={9} h={10}>
              <path d="M4.500 10V1M1 4.500 4.500 1 8 4.500" stroke="#3296fa" strokeWidth="1.500" />
            </Svg>
            0.5K/s
          </p>
          <p>
            <Svg w={9} h={10}>
              <path d="M4.500 0v9M1 5.500 4.500 9 8 5.500" stroke="#22b14c" strokeWidth="1.500" />
            </Svg>
            0.3K/s
          </p>
        </div>
        <Svg w={20}>
          <circle cx="10" cy="10" r="10" fill="#2d96fb" />
          <path d="M10 5v10M5 10h10" stroke="#fff" strokeWidth="2.400" />
        </Svg>
      </NetPill>
      <Ball $x={1088} $y={890}>
        <Svg w={82} h={86}>
          <ellipse cx="35" cy="34" rx="32" ry="34" fill="#3fcf72" opacity=".75" />
          <ellipse cx="46" cy="50" rx="35" ry="36" fill="#5fdc7c" opacity=".75" />
          <ellipse cx="37" cy="48" rx="36" ry="36" fill="#4cc46c" opacity=".75" />
          <circle cx="41" cy="45" r="36" fill="#2ed573" opacity=".85" />
          <circle cx="41" cy="45" r="31" fill="#f4f4f4" />
        </Svg>
        <p>
          66<small>%</small>
        </p>
      </Ball>

      <ImeBar $x={615} $y={962}>
        <button aria-label="标点">
          <Svg w={16} h={18}>
            <circle cx="4" cy="5" r="2.700" stroke={blue} strokeWidth="2" />
            <circle cx="12" cy="11" r="2.500" fill={blue} />
            <path d="M13.500 11q1 4-3 6" stroke={blue} strokeWidth="2" />
          </Svg>
        </button>
        <button aria-label="表情">
          <Svg w={19}>
            <circle cx="9.500" cy="9.500" r="8.300" stroke={blue} strokeWidth="2" />
            <path d="M5 11q4.500 6 9 0z" stroke={blue} strokeWidth="1.500" />
            <circle cx="6.500" cy="7" r="1.400" fill={blue} />
            <circle cx="12.500" cy="7" r="1.400" fill={blue} />
          </Svg>
        </button>
        <button aria-label="手写">
          <Svg w={18}>
            <path d="m2 14 1-4 8-8 3 3-8 8zM12 1l2-1 3 3-1 2z" fill={blue} />
            <path d="M1 17h16" stroke={blue} strokeWidth="1.800" />
          </Svg>
        </button>
        <button aria-label="截图">
          <Svg w={18}>
            <path d="m2 1 11 11M16 1 5 12" stroke={blue} strokeWidth="2.400" />
            <circle cx="4" cy="14" r="2.800" stroke={blue} strokeWidth="1.800" />
            <circle cx="14" cy="14" r="2.800" stroke={blue} strokeWidth="1.800" />
          </Svg>
        </button>
        <button aria-label="云">
          <Svg w={21} h={17}>
            <path d="M5 16q-4 0-4-4t4-4q1-7 6-7t5 6q4 1 4 5t-4 4z" stroke={blue} strokeWidth="2" />
          </Svg>
        </button>
        <button aria-label="键盘">
          <Svg w={20} h={16}>
            <rect x="1" y="1" width="18" height="14" stroke={blue} strokeWidth="2" />
            <path d="M4 4.500h12M4 8h12" stroke={blue} strokeWidth="2" strokeDasharray="2 1.300" />
            <path d="M4 11.700h2M7.500 11.700h5.500M14 11.700h2" stroke={blue} strokeWidth="2" />
          </Svg>
        </button>
        <button aria-label="用户">
          <Svg w={16} h={17}>
            <circle cx="8" cy="4" r="4" fill="#bcd3f5" />
            <path d="M1 17v-4q0-4 7-4t7 4v4z" fill="#bcd3f5" />
          </Svg>
        </button>
        <button aria-label="皮肤">
          <Svg w={22} h={32}>
            <path d="m1 13 6-3q4 3 8 0l6 3-2 5h-2v8H5v-8H3z" fill={blue} />
            <circle cx="19" cy="5" r="4" fill="#ff4d2e" />
          </Svg>
        </button>
        <button>简</button>
        <button aria-label="输入法设置">
          <Svg w={18}>
            <path d="m9 0 3 2.500 4 .500.500 4L18 9l-1.500 2-.500 4-4 .500L9 18l-3-2.500-4-.500-.500-4L0 9l1.500-2L2 3l4-.500z" fill={blue} />
            <circle cx="9" cy="9" r="3.200" fill="#fff" />
          </Svg>
        </button>
      </ImeBar>
      <ImeBlob $x={614} $y={960}>
        <Svg w={33} h={38}>
          <path d="m11 30 4 7q9-1 13-9z" fill="#45c3ff" />
          <rect width="33" height="33" rx="15" fill="#3478f6" />
        </Svg>
        <span>王</span>
      </ImeBlob>

      <Tip $x={1594} $y={808} role="tooltip">
        False
      </Tip>
      <Activate $x={1594} $y={925}>
        <h2>激活 Windows</h2>
        <p>转到“设置”以激活 Windows。</p>
      </Activate>
      <PageMark $x={1628} $y={1051}>https://blog.csdn.net/directx3d_beginner</PageMark>
    </Page>
  );
}
